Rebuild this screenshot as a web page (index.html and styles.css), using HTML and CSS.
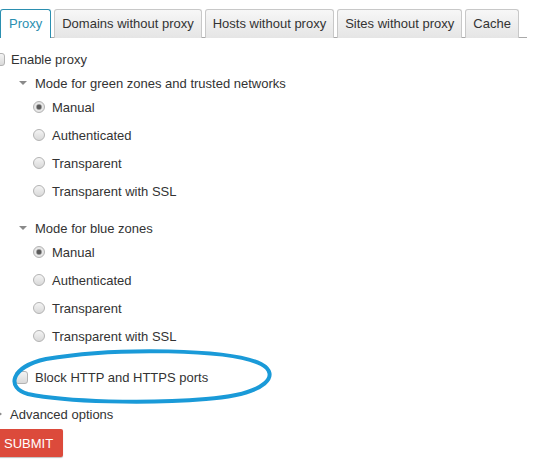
FILE: index.html
```html
<!DOCTYPE html>
<html lang="en">
  <head>
    <meta charset="UTF-8" />
    <title>Proxy settings</title>
    <link rel="stylesheet" href="styles.css">
  </head>
  <body>
    <main class="page">
      <!-- [1] Tabs -->
      <nav class="tabs">
        <a class="tab active">Proxy</a>
        <a class="tab">Domains without proxy</a>
        <a class="tab">Hosts without proxy</a>
        <a class="tab">Sites without proxy</a>
        <a class="tab">Cache</a>
      </nav>

      <!-- [2] Form -->
      <form class="form">
        <label class="row enable">
          <input type="checkbox" checked />
          <span>Enable proxy</span>
        </label>

        <div class="group">
          <div class="group-title"><i class="caret"></i>Mode for green zones and trusted networks</div>
          <label class="row radio"><input type="radio" name="green" checked /><span>Manual</span></label>
          <label class="row radio"><input type="radio" name="green" /><span>Authenticated</span></label>
          <label class="row radio"><input type="radio" name="green" /><span>Transparent</span></label>
          <label class="row radio"><input type="radio" name="green" /><span>Transparent with SSL</span></label>
        </div>

        <div class="group blue">
          <div class="group-title"><i class="caret"></i>Mode for blue zones</div>
          <label class="row radio"><input type="radio" name="blue" checked /><span>Manual</span></label>
          <label class="row radio"><input type="radio" name="blue" /><span>Authenticated</span></label>
          <label class="row radio"><input type="radio" name="blue" /><span>Transparent</span></label>
          <label class="row radio"><input type="radio" name="blue" /><span>Transparent with SSL</span></label>
        </div>

        <label class="row block">
          <input type="checkbox" />
          <span>Block HTTP and HTTPS ports</span>
        </label>

        <div class="advanced"><i class="caret-right"></i>Advanced options</div>

        <button type="button" class="submit">SUBMIT</button>
      </form>

      <!-- hand drawn highlight -->
      <svg class="highlight" width="280" height="70" viewBox="0 0 280 70" aria-hidden="true">
        <path
          d="M 40 13 C 110 1, 225 3, 255 18 C 274 28, 264 48, 200 53 C 140 58, 60 56, 22 48 C 0 42, 4 21, 40 13 Z"
          fill="none"
          stroke="#1a9ad8"
          stroke-width="4"
        />
      </svg>
    </main>
  </body>
</html>
```

FILE: styles.css
```css
/*
  Global styles
*/

* {
  margin: 0;
  padding: 0;
  box-sizing: border-box;
}
:root {
  --text: #333;
  --teal: #2b8fb0;
  --tab-border: #c8c8c8;
  --red: #dc4a3b;
}
body {
  overflow: hidden;
  background: #fff;
  color: var(--text);
  font-family: Arial, "Liberation Sans", sans-serif;
  font-size: 13px;
}
.page {
  position: relative;
  width: 533px;
  height: 473px;
}

/*
  Tabs
*/

.tabs {
  gap: 3px;
  width: 527px;
  display: flex;
  padding-top: 9px;
  border-bottom: 1px solid #a9a9a9;
}
.tab {
  flex: none;
  height: 29px;
  padding: 0 7px;
  line-height: 27px;
  white-space: nowrap;
  margin-bottom: -1px;
  color: var(--text);
  border: 1px solid var(--tab-border);
  border-bottom: none;
  border-radius: 3px 3px 0 0;
  background: linear-gradient(#f7f7f7, #e5e5e5);
}
.tab.active {
  padding: 0 8px;
  color: var(--teal);
  background: #fff;
  border-color: var(--teal);
}

/*
  Form
*/

.form {
  display: flex;
  flex-direction: column;
  align-items: flex-start;
}
.row {
  gap: 7px;
  height: 28px;
  display: flex;
  align-items: center;
}
.enable {
  gap: 6px;
  height: 27px;
  margin-top: 8px;
  margin-left: -8px;
}
.group-title {
  height: 20px;
  display: flex;
  align-items: center;
  padding-left: 19px;
}
.group.blue {
  margin-top: 13px;
}
.caret {
  width: 0;
  height: 0;
  margin-right: 8px;
  border-left: 4px solid transparent;
  border-right: 4px solid transparent;
  border-top: 4px solid #8a8a8a;
}
.radio {
  padding-left: 33px;
}
.block {
  gap: 7px;
  margin-top: 13px;
  padding-left: 15px;
}
.advanced {
  height: 20px;
  display: flex;
  align-items: center;
  margin-top: 13px;
  margin-left: -2px;
}
.caret-right {
  width: 0;
  height: 0;
  margin-right: 8px;
  border-top: 3px solid transparent;
  border-bottom: 3px solid transparent;
  border-left: 4px solid #8a8a8a;
}

/* custom inputs */
input[type="radio"],
input[type="checkbox"] {
  appearance: none;
  flex: none;
  width: 12px;
  height: 12px;
  border: 1px solid #b3b3b3;
  background: linear-gradient(#f4f4f4, #d9d9d9);
}
input[type="radio"] {
  border-radius: 50%;
}
input[type="radio"]:checked {
  background: radial-gradient(circle, #5a5a5a 0 2px, #9a9a9a 2.5px, #e8e8e8 3.5px, #dcdcdc);
}
input[type="checkbox"] {
  width: 13px;
  height: 13px;
  border-radius: 3px;
}
input[type="checkbox"]:checked {
  background: radial-gradient(circle, #555 0 1.5px, transparent 2px), linear-gradient(#f4f4f4, #d9d9d9);
}

/* submit */
.submit {
  height: 28px;
  margin-top: 5px;
  margin-left: -4px;
  padding: 0 10px 0 8px;
  border: none;
  border-radius: 2px;
  color: #fff;
  background: var(--red);
  box-shadow: 0 1px 1px rgba(0, 0, 0, 0.25);
  font-family: inherit;
  font-size: 13px;
}

/* overlay */
.highlight {
  top: 346px;
  left: 6px;
  position: absolute;
}
```
